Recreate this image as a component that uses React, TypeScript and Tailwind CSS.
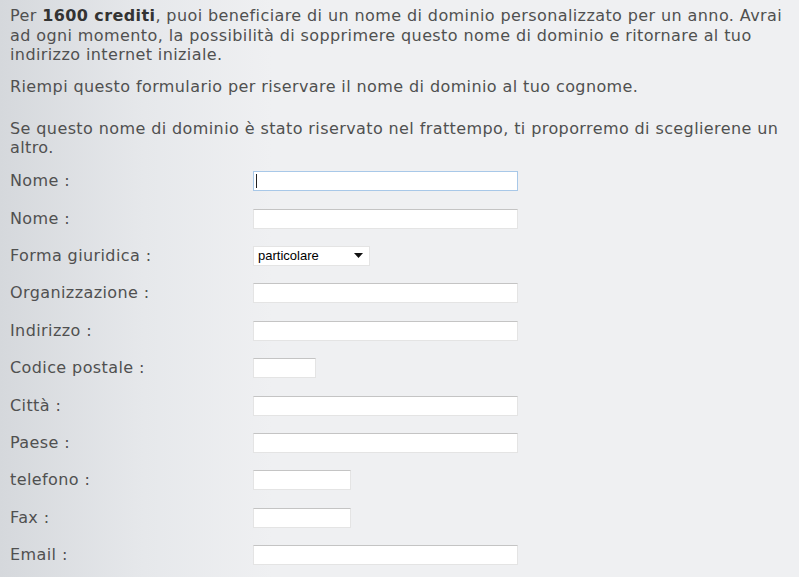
import React from 'react';

type Field = {
  label: string;
  kind: 'text' | 'select';
  width: string;
  focused?: boolean;
};

const fields: Field[] = [
  { label: 'Nome :', kind: 'text', width: 'w-[265px]', focused: true },
  { label: 'Nome :', kind: 'text', width: 'w-[265px]' },
  { label: 'Forma giuridica :', kind: 'select', width: 'w-[117px]' },
  { label: 'Organizzazione :', kind: 'text', width: 'w-[265px]' },
  { label: 'Indirizzo :', kind: 'text', width: 'w-[265px]' },
  { label: 'Codice postale :', kind: 'text', width: 'w-[63px]' },
  { label: 'Città :', kind: 'text', width: 'w-[265px]' },
  { label: 'Paese :', kind: 'text', width: 'w-[265px]' },
  { label: 'telefono :', kind: 'text', width: 'w-[98px]' },
  { label: 'Fax :', kind: 'text', width: 'w-[98px]' },
  { label: 'Email :', kind: 'text', width: 'w-[265px]' },
];

const TextBox: React.FC<{ width: string; focused?: boolean }> = ({ width, focused }) => (
  <div
    className={`${width} h-[20px] bg-white border ${
      focused
        ? 'border-[#a8c8e8]'
        : 'border-[#e4e4e4] border-t-[#c4c4c4]'
    } flex items-center`}
  >
    {focused && <span className="ml-[2px] w-px h-[14px] bg-[#222]" />}
  </div>
);

const SelectBox: React.FC<{ width: string }> = ({ width }) => (
  <div
    className={`${width} h-[20px] bg-white border border-[#e4e4e4] flex items-center justify-between pl-[4px] pr-[6px] text-[13px] tracking-normal text-black`}
    style={{ fontFamily: '"Liberation Sans", Arial, sans-serif' }}
  >
    <span>particolare</span>
    <svg width="9" height="5" viewBox="0 0 9 5">
      <path d="M0 0 L9 0 L4.5 5 Z" fill="#111" />
    </svg>
  </div>
);

export default function App() {
  return (
    <div
      className="w-[799px] h-[577px] overflow-hidden bg-[linear-gradient(to_right,#d5d8dc_0%,#e6e8eb_18%,#eff0f2_34%,#eff0f2_100%)] text-[#505050] text-[16px] tracking-[0.4px] pl-[10px] pt-[6px]"
      style={{ fontFamily: '"DejaVu Sans", Verdana, sans-serif' }}
    >
      <p className="leading-[19.5px]">
        Per <b className="text-[#333] font-bold">1600 crediti</b>, puoi beneficiare di un nome di dominio personalizzato per un anno. Avrai ad ogni momento, la possibilità di sopprimere questo nome di dominio e ritornare al tuo indirizzo internet iniziale.
      </p>
      <p className="leading-[19.5px] mt-[12px]">
        Riempi questo formulario per riservare il nome di dominio al tuo cognome.
      </p>
      <p className="leading-[19.5px] mt-[22.5px]">
        Se questo nome di dominio è stato riservato nel frattempo, ti proporremo di sceglierene un altro.
      </p>
      <div className="mt-[5px] flex flex-col">
        {fields.map((f, i) => (
          <div key={i} className="h-[37.4px] flex items-center">
            <div className="w-[243px] shrink-0">{f.label}</div>
            {f.kind === 'select' ? (
              <SelectBox width={f.width} />
            ) : (
              <TextBox width={f.width} focused={f.focused} />
            )}
          </div>
        ))}
      </div>
    </div>
  );
}
